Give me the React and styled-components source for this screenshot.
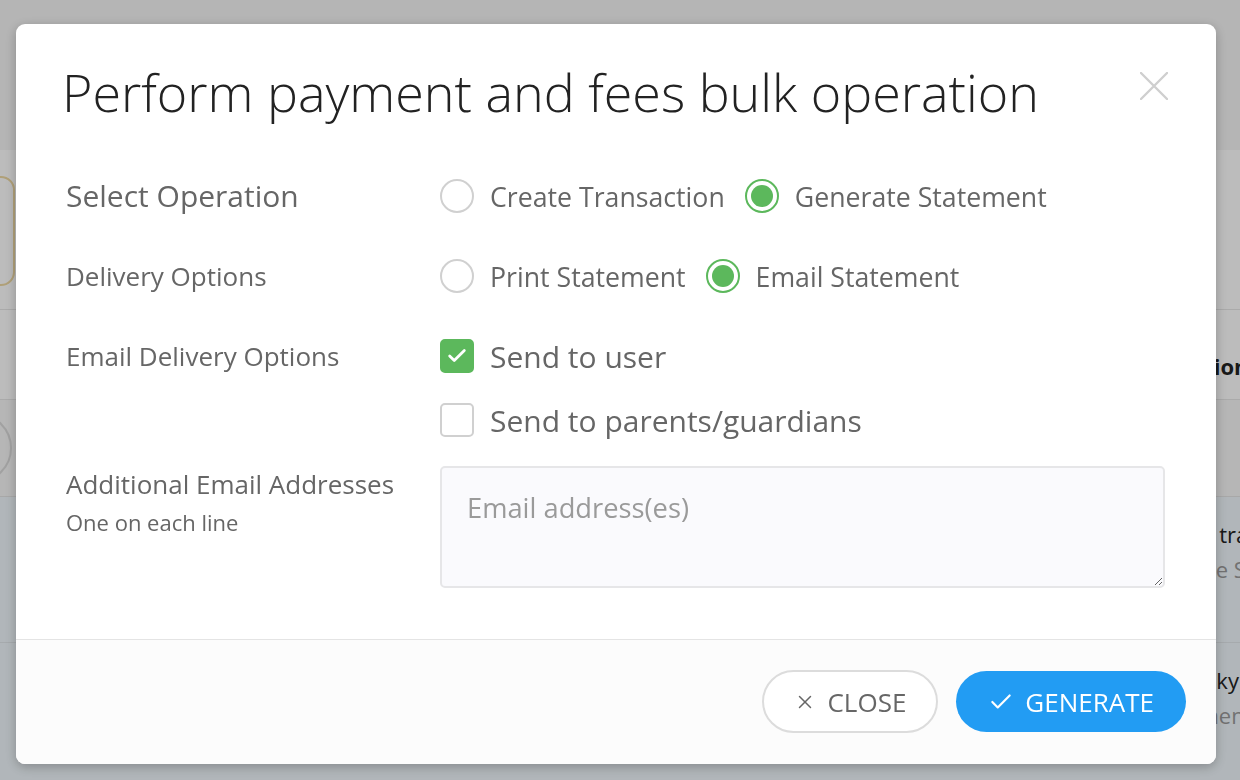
import styled, { createGlobalStyle } from 'styled-components'
import { X, Check } from 'lucide-react'

const GlobalStyle = createGlobalStyle`
  * { box-sizing: border-box; }
  body {
    margin: 0;
    font-family: "Open Sans", "Noto Sans", sans-serif;
    background: #f3f3f3;
  }
`

export default function App() {
  return (
    <>
      <GlobalStyle />
      <Page>
        <TopBar />
        <Toolbar><GoldButton /></Toolbar>
        <TableHead><HeadCell>Description</HeadCell></TableHead>
        <FilterRow><RoundSelect /></FilterRow>
        <TableRow>
          <Cell>
            <Primary>Bank transfer</Primary>
            <Secondary>Notice Statement</Secondary>
          </Cell>
        </TableRow>
        <TableRow>
          <Cell>
            <Primary>Chunky Club</Primary>
            <Secondary>Payment</Secondary>
          </Cell>
        </TableRow>
      </Page>
      <Backdrop />

      <Modal>
        <Header>
          <Title>Perform payment and fees bulk operation</Title>
          <CloseCross aria-label="Close">
            <svg width="28" height="28" viewBox="0 0 28 28">
              <path d="M1 1 L27 27 M27 1 L1 27" stroke="#cfcfcf" strokeWidth="2.4" strokeLinecap="round" />
            </svg>
          </CloseCross>
        </Header>

        <Body>
          <FormRow>
            <Label $big>Select Operation</Label>
            <Options>
              <Option><Radio /> Create Transaction</Option>
              <Option><Radio $checked /> Generate Statement</Option>
            </Options>
          </FormRow>

          <FormRow $gap={32}>
            <Label>Delivery Options</Label>
            <Options>
              <Option><Radio /> Print Statement</Option>
              <Option><Radio $checked /> Email Statement</Option>
            </Options>
          </FormRow>

          <FormRow $gap={32} $top>
            <Label>Email Delivery Options</Label>
            <CheckList>
              <CheckItem>
                <Box $checked><Check size={22} strokeWidth={3} color="#fff" /></Box>
                Send to user
              </CheckItem>
              <CheckItem>
                <Box />
                Send to parents/guardians
              </CheckItem>
            </CheckList>
          </FormRow>

          <FormRow $gap={22} $top>
            <LabelStack>
              <Label>Additional Email Addresses</Label>
              <SubLabel>One on each line</SubLabel>
            </LabelStack>
            <EmailArea placeholder="Email address(es)" />
          </FormRow>
        </Body>

        <Footer>
          <Button>
            <X size={22} strokeWidth={1.6} />
            CLOSE
          </Button>
          <Button $primary>
            <Check size={26} strokeWidth={2} />
            GENERATE
          </Button>
        </Footer>
      </Modal>
    </>
  )
}

/* page behind the dialog */

const Page = styled.div`
  width: 1240px;
  height: 780px;
  overflow: hidden;
  display: flex;
  flex-direction: column;
`

const TopBar = styled.div`
  height: 150px;
  flex-shrink: 0;
  background: #f3f3f3;
`

const Toolbar = styled.div`
  height: 160px;
  flex-shrink: 0;
  background: #fdfdfd;
  border-bottom: 1px solid #e4e4e4;
  padding-top: 26px;
`

const GoldButton = styled.div`
  width: 120px;
  height: 110px;
  margin-left: -105px;
  border: 2px solid #ecd7a2;
  border-radius: 14px;
`

const TableHead = styled.div`
  height: 90px;
  flex-shrink: 0;
  background: #fdfdfd;
  border-bottom: 1px solid #e4e4e4;
  display: flex;
  align-items: center;
  padding-top: 22px;
`

const HeadCell = styled.div`
  margin-left: 1122px;
  font-size: 22px;
  font-weight: 700;
  color: #222;
`

const FilterRow = styled.div`
  height: 97px;
  flex-shrink: 0;
  background: #f4f4f4;
  border-bottom: 1px solid #e2e2e2;
  display: flex;
  align-items: center;
`

const RoundSelect = styled.div`
  width: 70px;
  height: 70px;
  margin-left: -58px;
  border-radius: 50%;
  border: 2px solid #d8d8d8;
`

const TableRow = styled.div`
  height: 146px;
  flex-shrink: 0;
  background: #eef5fa;
  border-bottom: 1px solid #dfe4e8;
  padding-top: 20px;
`

const Cell = styled.div`
  margin-left: 1162px;
  display: flex;
  flex-direction: column;
  white-space: nowrap;
`

const Primary = styled.span`
  font-size: 22px;
  line-height: 35px;
  color: #222;
`

const Secondary = styled.span`
  font-size: 22px;
  line-height: 35px;
  color: #999;
`

const Backdrop = styled.div`
  position: fixed;
  inset: 0;
  background: rgba(0, 0, 0, 0.255);
`

/* dialog */

const Modal = styled.div`
  position: fixed;
  top: 24px;
  left: 16px;
  width: 1200px;
  background: #fff;
  border-radius: 9px;
  overflow: hidden;
  box-shadow: 0 3px 12px rgba(0, 0, 0, 0.25);
`

const Header = styled.div`
  display: flex;
  justify-content: space-between;
  align-items: flex-start;
  padding: 37px 48px 0 46px;
`

const Title = styled.h2`
  margin: 0;
  font-size: 52px;
  line-height: 62px;
  font-weight: 300;
  color: #222;
`

const CloseCross = styled.button`
  margin-top: 11px;
  padding: 0;
  border: none;
  background: none;
  width: 28px;
  height: 28px;
  cursor: pointer;
  display: flex;
`

const Body = styled.div`
  padding: 49px 51px 51px 50px;
  display: flex;
  flex-direction: column;
`

const FormRow = styled.div`
  display: grid;
  grid-template-columns: 374px 1fr;
  align-items: ${p => (p.$top ? 'start' : 'center')};
  min-height: 48px;
  margin-top: ${p => p.$gap || 0}px;
`

const Label = styled.div`
  font-size: ${p => (p.$big ? 30 : 26)}px;
  line-height: 48px;
  color: #666;
`

const LabelStack = styled.div`
  display: flex;
  flex-direction: column;

  & > div:first-child {
    line-height: 36px;
  }
`

const SubLabel = styled.div`
  font-size: 22px;
  line-height: 32px;
  color: #666;
  margin-top: 4px;
`

const Options = styled.div`
  display: flex;
  align-items: center;
  gap: 20px;
`

const Option = styled.label`
  display: flex;
  align-items: center;
  gap: 16px;
  font-size: 26.7px;
  color: #666;
  cursor: pointer;
`

const Radio = styled.span`
  width: 34px;
  height: 34px;
  border-radius: 50%;
  border: 2px solid ${p => (p.$checked ? '#5cb85c' : '#d0d0d0')};
  display: flex;
  align-items: center;
  justify-content: center;

  &::after {
    content: '';
    display: ${p => (p.$checked ? 'block' : 'none')};
    width: 22px;
    height: 22px;
    border-radius: 50%;
    background: #5cb85c;
  }
`

const CheckList = styled.div`
  display: flex;
  flex-direction: column;
  gap: 16px;
`

const CheckItem = styled.label`
  height: 48px;
  display: flex;
  align-items: center;
  gap: 16px;
  font-size: 30px;
  color: #666;
  cursor: pointer;
`

const Box = styled.span`
  width: 34px;
  height: 34px;
  border-radius: 5px;
  border: 2px solid ${p => (p.$checked ? '#5cb85c' : '#d0d0d0')};
  background: ${p => (p.$checked ? '#5cb85c' : '#fff')};
  display: flex;
  align-items: center;
  justify-content: center;
`

const EmailArea = styled.textarea`
  width: 100%;
  height: 122px;
  border: 2px solid #e6e6e8;
  border-radius: 5px;
  background: #fafafd;
  padding: 21px 25px;
  font-family: inherit;
  font-size: 27.3px;
  color: #444;
  outline: none;

  &::placeholder {
    color: #9a9a9a;
  }
`

const Footer = styled.div`
  display: flex;
  justify-content: flex-end;
  gap: 18px;
  padding: 30px 30px 31px;
  background: #fcfcfc;
  border-top: 1px solid #e4e4e4;
`

const Button = styled.button`
  height: ${p => (p.$primary ? 61 : 63)}px;
  margin-top: ${p => (p.$primary ? 1 : 0)}px;
  padding: 0 ${p => (p.$primary ? 32 : 30)}px;
  border-radius: 32px;
  border: ${p => (p.$primary ? 'none' : '2px solid #dcdcdc')};
  background: ${p => (p.$primary ? '#229cf3' : '#fff')};
  color: ${p => (p.$primary ? '#fff' : '#666')};
  font-family: inherit;
  font-size: 26px;
  display: flex;
  align-items: center;
  gap: 11px;
  cursor: pointer;
`
